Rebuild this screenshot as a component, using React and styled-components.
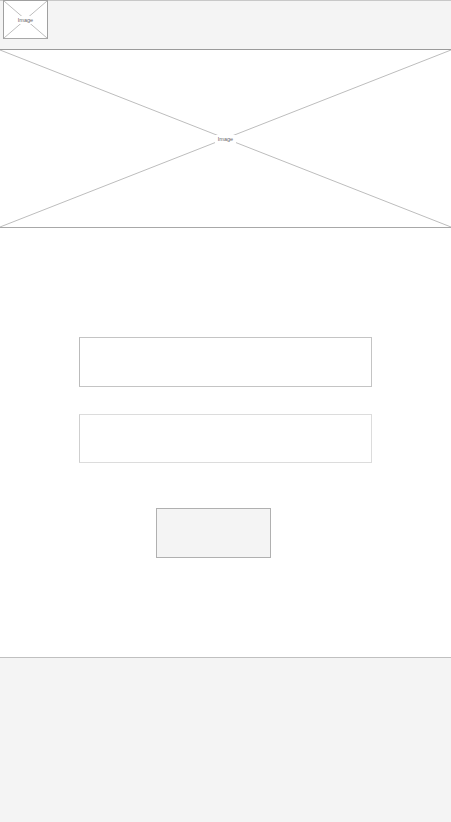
import React from "react";
import styled, { createGlobalStyle } from "styled-components";

const Global = createGlobalStyle`
  html, body { margin: 0; padding: 0; background: #fff; }
  body { font-family: "Liberation Sans", Arial, sans-serif; }
  * { box-sizing: border-box; }
`;

const Page = styled.div`
  display: flex;
  flex-direction: column;
  min-height: 822px;
`;

const Header = styled.header`
  height: 50px;
  background: #f4f4f4;
  border-top: 1px solid #c8c8c8;
  border-bottom: 1px solid #9a9a9a;
  display: flex;
  align-items: flex-start;
  padding-left: 3px;
`;

const PlaceholderBox = styled.div`
  position: relative;
  width: ${(p) => p.$w};
  height: ${(p) => p.$h}px;
  margin-top: ${(p) => (p.$framed ? "-1px" : "0")};
  background: #fff;
  border: ${(p) => (p.$framed ? "1px solid #a0a0a0" : "none")};
  border-bottom: 1px solid #a8a8a8;
  display: flex;
  align-items: center;
  justify-content: center;
  overflow: hidden;
  flex-shrink: 0;
`;

const Cross = styled.svg`
  position: absolute;
  inset: 0;
  width: 100%;
  height: 100%;
`;

const Label = styled.span`
  position: relative;
  font-size: 5.5px;
  color: #666;
  background: #fff;
  padding: 0 3px;
  line-height: 8px;
`;

function Placeholder({ w, h, framed }) {
  return (
    <PlaceholderBox $w={w} $h={h} $framed={framed}>
      <Cross viewBox="0 0 100 100" preserveAspectRatio="none">
        <line x1="0" y1="0" x2="100" y2="100" stroke="#bdbdbd" strokeWidth="1" vectorEffect="non-scaling-stroke" />
        <line x1="100" y1="0" x2="0" y2="100" stroke="#bdbdbd" strokeWidth="1" vectorEffect="non-scaling-stroke" />
      </Cross>
      <Label>Image</Label>
    </PlaceholderBox>
  );
}

const Main = styled.main`
  display: flex;
  flex-direction: column;
  align-items: center;
  padding-top: 109px;
  padding-bottom: 99px;
`;

const Field = styled.div`
  width: 293px;
  height: ${(p) => p.$h}px;
  background: #fff;
  border: 1px solid ${(p) => (p.$light ? "#dcdcdc" : "#c4c4c4")};
  border-left-color: ${(p) => (p.$light ? "#cfcfcf" : "#bbbbbb")};
  margin-bottom: ${(p) => p.$mb}px;
`;

const Button = styled.div`
  width: 115px;
  height: 50px;
  margin-left: -24px;
  background: #f4f4f4;
  border: 1px solid #b0b0b0;
`;

const Footer = styled.footer`
  flex: 1;
  background: #f4f4f4;
  border-top: 1px solid #c0c0c0;
`;

export default function App() {
  return (
    <>
      <Global />
      <Page>
        <Header>
          <Placeholder w="45px" h={39} framed />
        </Header>
        <Placeholder w="100%" h={178} />
        <Main>
          <Field $h={50} $mb={27} />
          <Field $h={49} $mb={45} $light />
          <Button />
        </Main>
        <Footer />
      </Page>
    </>
  );
}
